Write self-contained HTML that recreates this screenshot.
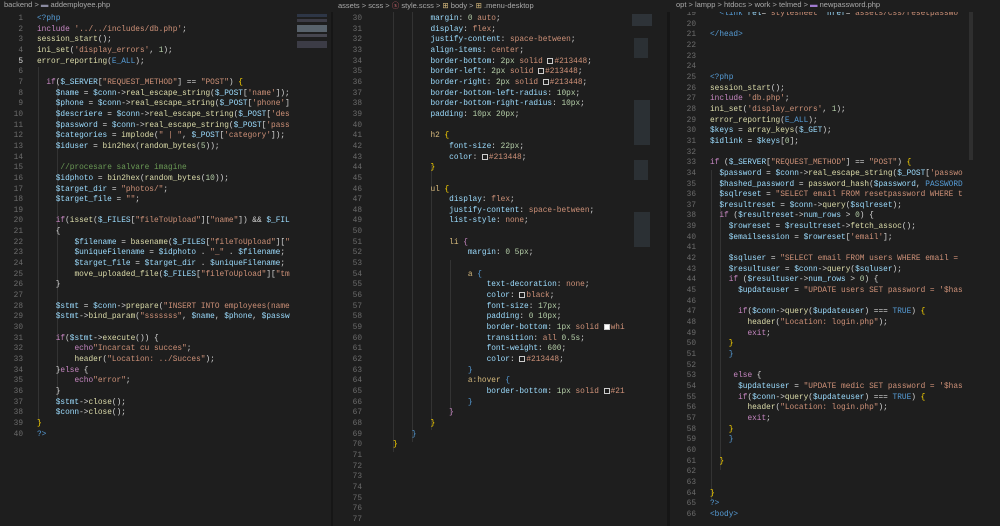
<!DOCTYPE html>
<html><head><meta charset="utf-8">
<style>
html,body{margin:0;padding:0;background:#1e1e1e;width:1000px;height:526px;overflow:hidden;}
.pane{position:absolute;top:0;height:526px;overflow:hidden;background:#1e1e1e;}
.bc{position:absolute;left:4px;top:0;height:12px;line-height:12px;font:7.5px "Liberation Sans",sans-serif;color:#a9a9a9;white-space:nowrap;z-index:3;background:#1e1e1e;width:100%;}
.ln{position:absolute;text-align:right;font:7.8px/10.65px "Liberation Mono",monospace;color:#6b6b6b;white-space:pre;}
.code{position:absolute;font:7.8px/10.65px "Liberation Mono",monospace;color:#d4d4d4;white-space:pre;}
.v{color:#9cdcfe}.s{color:#ce9178}.k{color:#c586c0}.c{color:#6a9955}.f{color:#dcdcaa}.t{color:#569cd6}.n{color:#b5cea8}.y{color:#ffd700}.p{color:#9cdcfe}.sel{color:#d7ba7d}
.sq{display:inline-block;width:6px;height:6px;border:1px solid #ccc;box-sizing:border-box;vertical-align:-1px;margin-right:1px}
.w{background:#fff}
.mm{position:absolute;opacity:.55}
.guide{position:absolute;width:1px;background:#333}
</style></head><body>

<!-- LEFT PANE -->
<div class="pane" style="left:0;width:333px;">
<div class="bc">backend &gt; <span style="color:#8a8aa0">▬</span> addemployee.php</div>
<div class="ln" style="left:0;width:23px;top:14px;">1
2
3
4
<span style="color:#ddd">5</span>
6
7
8
9
10
11
12
13
14
15
16
17
18
19
20
21
22
23
24
25
26
27
28
29
30
31
32
33
34
35
36
37
38
39
40</div>
<div class="guide" style="left:38px;top:67px;height:355px;"></div>
<div class="guide" style="left:57px;top:78px;height:320px;"></div>
<div class="code" style="left:37px;top:14px;"><span class="t">&lt;?php</span>
<span class="k">include</span> <span class="s">'../../includes/db.php'</span>;
<span class="f">session_start</span>();
<span class="f">ini_set</span>(<span class="s">'display_errors'</span>, <span class="n">1</span>);
<span class="f">error_reporting</span>(<span class="t">E_ALL</span>);

  <span class="k">if</span>(<span class="v">$_SERVER</span>[<span class="s">"REQUEST_METHOD"</span>] == <span class="s">"POST"</span>) <span class="y">{</span>
    <span class="v">$name</span> = <span class="v">$conn</span>-&gt;<span class="f">real_escape_string</span>(<span class="v">$_POST</span>[<span class="s">'name'</span>]);
    <span class="v">$phone</span> = <span class="v">$conn</span>-&gt;<span class="f">real_escape_string</span>(<span class="v">$_POST</span>[<span class="s">'phone'</span>]
    <span class="v">$descriere</span> = <span class="v">$conn</span>-&gt;<span class="f">real_escape_string</span>(<span class="v">$_POST</span>[<span class="s">'des</span>
    <span class="v">$password</span> = <span class="v">$conn</span>-&gt;<span class="f">real_escape_string</span>(<span class="v">$_POST</span>[<span class="s">'pass</span>
    <span class="v">$categories</span> = <span class="f">implode</span>(<span class="s">" | "</span>, <span class="v">$_POST</span>[<span class="s">'category'</span>]);
    <span class="v">$iduser</span> = <span class="f">bin2hex</span>(<span class="f">random_bytes</span>(<span class="n">5</span>));

     <span class="c">//procesare salvare imagine</span>
    <span class="v">$idphoto</span> = <span class="f">bin2hex</span>(<span class="f">random_bytes</span>(<span class="n">10</span>));
    <span class="v">$target_dir</span> = <span class="s">"photos/"</span>;
    <span class="v">$target_file</span> = <span class="s">""</span>;

    <span class="k">if</span>(<span class="f">isset</span>(<span class="v">$_FILES</span>[<span class="s">"fileToUpload"</span>][<span class="s">"name"</span>]) &amp;&amp; <span class="v">$_FIL</span>
    {
        <span class="v">$filename</span> = <span class="f">basename</span>(<span class="v">$_FILES</span>[<span class="s">"fileToUpload"</span>][<span class="s">"</span>
        <span class="v">$uniqueFilename</span> = <span class="v">$idphoto</span> . <span class="s">"_"</span> . <span class="v">$filename</span>;
        <span class="v">$target_file</span> = <span class="v">$target_dir</span> . <span class="v">$uniqueFilename</span>;
        <span class="f">move_uploaded_file</span>(<span class="v">$_FILES</span>[<span class="s">"fileToUpload"</span>][<span class="s">"tm</span>
    }

    <span class="v">$stmt</span> = <span class="v">$conn</span>-&gt;<span class="f">prepare</span>(<span class="s">"INSERT INTO employees(name</span>
    <span class="v">$stmt</span>-&gt;<span class="f">bind_param</span>(<span class="s">"sssssss"</span>, <span class="v">$name</span>, <span class="v">$phone</span>, <span class="v">$passw</span>

    <span class="k">if</span>(<span class="v">$stmt</span>-&gt;<span class="f">execute</span>()) {
        <span class="k">echo</span><span class="s">"Incarcat cu succes"</span>;
        <span class="f">header</span>(<span class="s">"Location: ../Succes"</span>);
    }<span class="k">else</span> {
        <span class="k">echo</span><span class="s">"error"</span>;
    }
    <span class="v">$stmt</span>-&gt;<span class="f">close</span>();
    <span class="v">$conn</span>-&gt;<span class="f">close</span>();
<span class="y">}</span>
<span class="t">?&gt;</span></div>
<div class="mm" style="left:297px;top:14px;width:30px;height:45px;background:linear-gradient(#3a4a66 0 3px,#1e1e1e 3px 5px,#556 5px 8px,#1e1e1e 8px 11px,#8899aa 11px 18px,#1e1e1e 18px 20px,#667 20px 23px,#1e1e1e 23px 27px,#556 27px 34px,#1e1e1e 34px);"></div>
<div style="position:absolute;left:331px;top:0;width:2px;height:526px;background:#161616"></div>
</div>

<!-- MIDDLE PANE -->
<div class="pane" style="left:334px;width:336px;">
<div class="bc">assets &gt; scss &gt; <span style="color:#e06c75">ⓢ</span> style.scss &gt; <span style="color:#d7ba7d">⊞</span> body &gt; <span style="color:#d7ba7d">⊞</span> .menu-desktop</div>
<div class="ln" style="left:0;width:28px;top:14px;">30
31
32
33
34
35
36
37
38
39
40
41
42
43
44
45
46
47
48
49
50
51
52
53
54
55
56
57
58
59
60
61
62
63
64
65
66
67
68
69
70
71
72
73
74
75
76
77</div>
<div class="guide" style="left:59px;top:12px;height:440px;"></div>
<div class="guide" style="left:78px;top:12px;height:430px;"></div>
<div class="guide" style="left:97px;top:165px;height:265px;"></div>
<div class="guide" style="left:116px;top:260px;height:155px;"></div>
<div class="code" style="left:59px;top:14px;">        <span class="p">margin</span>: <span class="n">0</span> <span class="s">auto</span>;
        <span class="p">display</span>: <span class="s">flex</span>;
        <span class="p">justify-content</span>: <span class="s">space-between</span>;
        <span class="p">align-items</span>: <span class="s">center</span>;
        <span class="p">border-bottom</span>: <span class="n">2px</span> <span class="s">solid</span> <span class="sq"></span><span class="s">#213448</span>;
        <span class="p">border-left</span>: <span class="n">2px</span> <span class="s">solid</span> <span class="sq"></span><span class="s">#213448</span>;
        <span class="p">border-right</span>: <span class="n">2px</span> <span class="s">solid</span> <span class="sq"></span><span class="s">#213448</span>;
        <span class="p">border-bottom-left-radius</span>: <span class="n">10px</span>;
        <span class="p">border-bottom-right-radius</span>: <span class="n">10px</span>;
        <span class="p">padding</span>: <span class="n">10px 20px</span>;

        <span class="sel">h2</span> <span class="y">{</span>
            <span class="p">font-size</span>: <span class="n">22px</span>;
            <span class="p">color</span>: <span class="sq"></span><span class="s">#213448</span>;
        <span class="y">}</span>

        <span class="sel">ul</span> <span class="y">{</span>
            <span class="p">display</span>: <span class="s">flex</span>;
            <span class="p">justify-content</span>: <span class="s">space-between</span>;
            <span class="p">list-style</span>: <span class="s">none</span>;

            <span class="sel">li</span> <span class="k">{</span>
                <span class="p">margin</span>: <span class="n">0 5px</span>;

                <span class="sel">a</span> <span class="t">{</span>
                    <span class="p">text-decoration</span>: <span class="s">none</span>;
                    <span class="p">color</span>: <span class="sq"></span><span class="s">black</span>;
                    <span class="p">font-size</span>: <span class="n">17px</span>;
                    <span class="p">padding</span>: <span class="n">0 10px</span>;
                    <span class="p">border-bottom</span>: <span class="n">1px</span> <span class="s">solid</span> <span class="sq w"></span><span class="s">whi</span>
                    <span class="p">transition</span>: <span class="s">all</span> <span class="n">0.5s</span>;
                    <span class="p">font-weight</span>: <span class="n">600</span>;
                    <span class="p">color</span>: <span class="sq"></span><span class="s">#213448</span>;
                <span class="t">}</span>
                <span class="sel">a:hover</span> <span class="t">{</span>
                    <span class="p">border-bottom</span>: <span class="n">1px</span> <span class="s">solid</span> <span class="sq"></span><span class="s">#21</span>
                <span class="t">}</span>
            <span class="k">}</span>
        <span class="y">}</span>
    <span class="t">}</span>
<span class="y">}</span></div>
<div class="mm" style="left:298px;top:14px;width:20px;height:12px;background:#556677;opacity:.3"></div>
<div class="mm" style="left:300px;top:38px;width:14px;height:20px;background:#556677;opacity:.25"></div>
<div class="mm" style="left:300px;top:100px;width:16px;height:45px;background:#556677;opacity:.25"></div>
<div class="mm" style="left:300px;top:160px;width:14px;height:20px;background:#556677;opacity:.25"></div>
<div class="mm" style="left:300px;top:212px;width:16px;height:35px;background:#556677;opacity:.25"></div>
<div style="position:absolute;left:333px;top:0;width:3px;height:526px;background:#161616"></div>
</div>

<!-- RIGHT PANE -->
<div class="pane" style="left:672px;width:328px;">
<div class="ln" style="left:0;width:24px;top:9px;">19
20
21
22
23
24
25
26
27
28
29
30
31
32
33
34
35
36
37
38
39
40
41
42
43
44
45
46
47
48
49
50
51
52
53
54
55
56
57
58
59
60
61
62
63
64
65
66</div>
<div class="guide" style="left:39px;top:170px;height:330px;"></div>
<div class="guide" style="left:48px;top:180px;height:290px;"></div>
<div class="code" style="left:38px;top:9px;">  <span class="t">&lt;link</span> <span class="v">rel</span>=<span class="s">"stylesheet"</span> <span class="v">href</span>=<span class="s">"assets/css/resetpasswo</span>

<span class="t">&lt;/head&gt;</span>



<span class="t">&lt;?php</span>
<span class="f">session_start</span>();
<span class="k">include</span> <span class="s">'db.php'</span>;
<span class="f">ini_set</span>(<span class="s">'display_errors'</span>, <span class="n">1</span>);
<span class="f">error_reporting</span>(<span class="t">E_ALL</span>);
<span class="v">$keys</span> = <span class="f">array_keys</span>(<span class="v">$_GET</span>);
<span class="v">$idlink</span> = <span class="v">$keys</span>[<span class="n">0</span>];

<span class="k">if</span> (<span class="v">$_SERVER</span>[<span class="s">"REQUEST_METHOD"</span>] == <span class="s">"POST"</span>) <span class="y">{</span>
  <span class="v">$password</span> = <span class="v">$conn</span>-&gt;<span class="f">real_escape_string</span>(<span class="v">$_POST</span>[<span class="s">'passwo</span>
  <span class="v">$hashed_password</span> = <span class="f">password_hash</span>(<span class="v">$password</span>, <span class="t">PASSWORD</span>
  <span class="v">$sqlreset</span> = <span class="s">"SELECT email FROM resetpassword WHERE t</span>
  <span class="v">$resultreset</span> = <span class="v">$conn</span>-&gt;<span class="f">query</span>(<span class="v">$sqlreset</span>);
  <span class="k">if</span> (<span class="v">$resultreset</span>-&gt;<span class="v">num_rows</span> &gt; <span class="n">0</span>) {
    <span class="v">$rowreset</span> = <span class="v">$resultreset</span>-&gt;<span class="f">fetch_assoc</span>();
    <span class="v">$emailsession</span> = <span class="v">$rowreset</span>[<span class="s">'email'</span>];

    <span class="v">$sqluser</span> = <span class="s">"SELECT email FROM users WHERE email =</span>
    <span class="v">$resultuser</span> = <span class="v">$conn</span>-&gt;<span class="f">query</span>(<span class="v">$sqluser</span>);
    <span class="k">if</span> (<span class="v">$resultuser</span>-&gt;<span class="v">num_rows</span> &gt; <span class="n">0</span>) {
      <span class="v">$updateuser</span> = <span class="s">"UPDATE users SET password = '$has</span>

      <span class="k">if</span>(<span class="v">$conn</span>-&gt;<span class="f">query</span>(<span class="v">$updateuser</span>) === <span class="t">TRUE</span>) <span class="y">{</span>
        <span class="f">header</span>(<span class="s">"Location: login.php"</span>);
        <span class="k">exit</span>;
    <span class="y">}</span>
    <span class="t">}</span>

     <span class="k">else</span> {
      <span class="v">$updateuser</span> = <span class="s">"UPDATE medic SET password = '$has</span>
      <span class="k">if</span>(<span class="v">$conn</span>-&gt;<span class="f">query</span>(<span class="v">$updateuser</span>) === <span class="t">TRUE</span>) <span class="y">{</span>
        <span class="f">header</span>(<span class="s">"Location: login.php"</span>);
        <span class="k">exit</span>;
    <span class="y">}</span>
    <span class="t">}</span>

  <span class="y">}</span>


<span class="y">}</span>
<span class="t">?&gt;</span>
<span class="t">&lt;body&gt;</span></div>
<div class="bc" style="left:0;padding-left:4px;">opt &gt; lampp &gt; htdocs &gt; work &gt; telmed &gt; <span style="color:#a07ad0">▬</span> newpassword.php</div>
<div style="position:absolute;left:297px;top:10px;width:4px;height:150px;background:#2f2f2f"></div>
</div>
</body></html>
